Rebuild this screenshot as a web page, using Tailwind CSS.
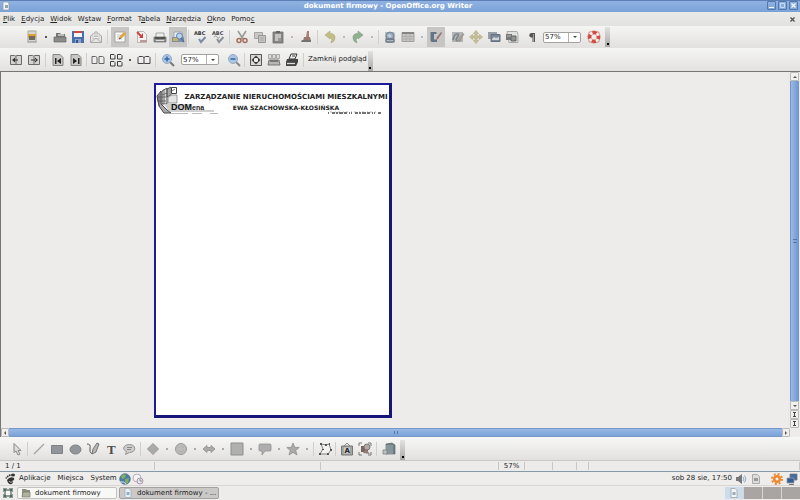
<!DOCTYPE html>
<html lang="pl">
<head>
<meta charset="utf-8">
<title>dokument firmowy - OpenOffice.org Writer</title>
<script src="https://cdn.jsdelivr.net/npm/@tailwindcss/browser@4"></script>
</head>
<body class="flex h-screen flex-col overflow-hidden bg-[#edeceb] font-['DejaVu_Sans',sans-serif] text-[7px] leading-none text-[#222]">

<header class="relative flex h-3 shrink-0 items-center justify-center border-t border-[#5c80b5] bg-linear-to-b from-[#8fb2e2] to-[#7ba2d8] text-white">
  <svg class="absolute left-0.5 top-0 h-2.5 w-2" viewBox="0 0 8 10"><path d="M1 1h5l1 2v6H1z" fill="#f1f4f4" stroke="#8b9ba8" stroke-width=".7"/><path d="M3 4h3v3H3z" fill="#91a4ad"/></svg>
  <h1 class="pr-6 text-[7px] font-bold">dokument firmowy - OpenOffice.org Writer</h1>
  <div class="absolute right-0.5 top-0 flex gap-[2px] [&>button]:grid [&>button]:size-[9px] [&>button]:place-items-center [&>button]:rounded-[1px] [&>button]:border [&>button]:border-[#5578aa]">
    <button aria-label="Minimalizuj"><svg class="size-[7px]" viewBox="0 0 7 7"><path d="M1 5.500h5" stroke="#fff"/></svg></button>
    <button aria-label="Maksymalizuj"><svg class="size-[7px]" viewBox="0 0 7 7"><path d="M1.500 1.500h4v4h-4z" fill="none" stroke="#c8daf2"/></svg></button>
    <button aria-label="Zamknij"><svg class="size-[7px]" viewBox="0 0 7 7"><path d="M1.500 1.500l4 4m0-4l-4 4" stroke="#fff" stroke-width="1.200"/></svg></button>
  </div>
</header>

<nav class="flex h-3.5 shrink-0 items-center gap-1.5 bg-linear-to-b from-[#eaeae9] to-[#e2e2e1] pl-[3px] pr-[5px]" aria-label="Menu">
  <button><u>P</u>lik</button><button><u>E</u>dycja</button><button><u>W</u>idok</button><button>W<u>s</u>taw</button><button><u>F</u>ormat</button><button>T<u>a</u>bela</button><button><u>N</u>arzędzia</button><button><u>O</u>kno</button><button>Pomo<u>c</u></button>
  <button class="ml-auto" aria-label="Zamknij dokument"><svg class="size-[5px]" viewBox="0 0 5 5"><path d="M.5.500l4 4m0-4l-4 4" stroke="#555" stroke-width="1.400"/></svg></button>
</nav>

<div role="toolbar" aria-label="Standardowy" class="flex h-[22px] shrink-0 items-center bg-linear-to-b from-[#f5f5f4] to-[#e1e0df] pl-[23px] [&>button]:grid [&>button]:h-5 [&>button]:w-[18px] [&>button]:place-items-center [&>i]:w-2.5 [&>i]:shrink-0 [&_svg]:size-3.5">
  <button aria-label="Nowy"><svg viewBox="0 0 14 14"><path d="M3 1h8v11H3z" fill="#d8d6cf" stroke="#aaa79b"/><path d="M3 4h8v4H3z" fill="#d9a43e"/><path d="M4 6h6v4H4z" fill="#70695e"/><path d="M2 12h10" stroke="#aaa"/></svg></button>
  <i class="grid place-items-center"><b class="size-[2px] bg-[#555]"></b></i>
  <button aria-label="Otwórz"><svg viewBox="0 0 14 14"><path d="M3 3h4l1 1h4v4H3z" fill="#777"/><path d="M5 4h6v2H5z" fill="#bbb"/><path d="M1 7h12v5H1z" fill="#8b8b8a" stroke="#666" stroke-width=".7"/></svg></button>
  <button aria-label="Zapisz"><svg viewBox="0 0 14 14"><path d="M1 1h12v12H1z" fill="#4a6fae"/><path d="M3 1h8v6H3z" fill="#f5f5f5"/><path d="M3 1h8v2H3z" fill="#cf4b41"/><path d="M4 9h6v4H4z" fill="#8da2c3"/><path d="M5 10h2v3H5z" fill="#345488"/></svg></button>
  <button aria-label="Wyślij"><svg viewBox="0 0 14 14"><path d="M1.500 6L7 1.500 12.500 6v6.500h-11z" fill="#e3e3e2" stroke="#aaa9a7"/><path d="M4 3.500h6v5H4z" fill="#f6f6f5" stroke="#bbb" stroke-width=".7"/><path d="M2 12l5-4 5 4M5 5h4M5 6.500h4" fill="none" stroke="#aaa" stroke-width=".8"/></svg></button>
  <span class="mx-[2px] h-3.5 w-[2px] border-l border-[#d0cfcd]"></span>
  <button aria-label="Edytuj plik" aria-pressed="true" class="bg-[#c7c6c4]"><svg viewBox="0 0 14 14"><path d="M2 2h10v10H2z" fill="#fafafa" stroke="#9a9a9a" stroke-width=".8"/><path d="M4 5h4M4 7h3M4 9h5" stroke="#bbb" stroke-width=".8"/><path d="M6 9l1-3 4-4 2 2-4 4z" fill="#e0a43b"/><path d="M6 9.500l.5-2 1.500 1z" fill="#444"/></svg></button>
  <span class="w-1"></span>
  <button aria-label="Eksportuj PDF"><svg viewBox="0 0 14 14"><path d="M2.500 1.500h6l3 3v8h-9z" fill="#f1f1f0" stroke="#aaa" stroke-width=".8"/><path d="M2 2l5 5" stroke="#c9443e" stroke-width="2"/><path d="M8 3v5H4z" fill="#c9443e"/><path d="M5 10h7v2H5z" fill="#b99"/></svg></button>
  <button aria-label="Drukuj"><svg viewBox="0 0 14 14"><path d="M3 3h8v5H3z" fill="#eee" stroke="#888" stroke-width=".7"/><path d="M1 7h12v5H1z" fill="#929291" stroke="#666" stroke-width=".7"/><path d="M2 8h10" stroke="#3f3f3f" stroke-width="1.500"/><path d="M3 10.500h8" stroke="#ddd"/></svg></button>
  <button aria-label="Podgląd strony" aria-pressed="true" class="bg-[#c7c6c4]"><svg viewBox="0 0 14 14"><path d="M3 2h8v7H3z" fill="#e9edf2" stroke="#8b98a6" stroke-width=".7"/><path d="M1 7h12v5H1z" fill="#7d8fa5"/><path d="M2 8h5v3H2z" fill="#c5b263"/><circle cx="8.500" cy="6" r="3" fill="#b9d3ee" stroke="#6183ad"/><path d="M10 8l3 4" stroke="#54739a" stroke-width="1.500"/></svg></button>
  <span class="mx-px h-3.5 w-[2px] border-l border-[#d0cfcd]"></span>
  <button aria-label="Pisownia"><svg viewBox="0 0 14 14"><text x="1" y="5" font-size="5" font-weight="bold" fill="#333">ABC</text><path d="M6 9l2 3 4.500-5" fill="none" stroke="#7b8da3" stroke-width="2"/></svg></button>
  <button aria-label="Autosprawdzanie"><svg viewBox="0 0 14 14"><text x="1" y="5" font-size="5" font-weight="bold" fill="#444">ABC</text><path d="M3 7q1.500-2 3 0t3 0" fill="none" stroke="#999"/><path d="M6 9l2 3 4.500-5" fill="none" stroke="#8b9398" stroke-width="2"/></svg></button>
  <span class="mx-[2px] h-3.5 w-[2px] border-l border-[#d0cfcd]"></span>
  <button aria-label="Wytnij"><svg viewBox="0 0 14 14"><path d="M3 1l5 8M11 1L6 9" stroke="#9b9a98" stroke-width="1.600"/><circle cx="4" cy="10.500" r="2" fill="none" stroke="#a56d5c" stroke-width="1.500"/><circle cx="10" cy="10.500" r="2" fill="none" stroke="#a56d5c" stroke-width="1.500"/></svg></button>
  <button aria-label="Kopiuj"><svg viewBox="0 0 14 14"><path d="M1.500 2.500h8v6h-8z" fill="#c9c8c6" stroke="#a5a4a2"/><path d="M5.500 5.500h7v7h-7z" fill="#c4c3c1" stroke="#999896"/><path d="M7 8h4M7 10h4" stroke="#aaa"/></svg></button>
  <button aria-label="Wklej"><svg viewBox="0 0 14 14"><path d="M2 2h10v11H2z" fill="#868583" stroke="#70706e" stroke-width=".8"/><path d="M4 4h6v7H4z" fill="#c4c3c1"/><path d="M5 1h4v2H5z" fill="#666"/><path d="M7 8h3v3H7z" fill="#999"/></svg></button>
  <i class="grid place-items-center"><b class="size-[2px] bg-[#bbb]"></b></i>
  <button aria-label="Pędzel formatów"><svg viewBox="0 0 14 14"><path d="M8 1h2v6H7z" fill="#ad8175"/><path d="M5 7h6l1 4H4z" fill="#98796f"/><path d="M3 10h9v2H2z" fill="#747271"/></svg></button>
  <span class="mx-[2px] h-3.5 w-[2px] border-l border-[#d0cfcd]"></span>
  <button aria-label="Cofnij"><svg viewBox="0 0 14 14"><path d="M2 5l5-4v2.500q5 0 5 4T8 13q2-5-1-5.500V9z" fill="#c3bd83" stroke="#aaa578" stroke-width=".6"/></svg></button>
  <i class="grid place-items-center"><b class="size-[2px] bg-[#bbb]"></b></i>
  <button aria-label="Ponów"><svg viewBox="0 0 14 14"><path d="M12 5L7 1v2.500q-5 0-5 4T6 13Q4 8 7 7.500V9z" fill="#90b18f" stroke="#799a79" stroke-width=".6"/></svg></button>
  <i class="grid place-items-center"><b class="size-[2px] bg-[#bbb]"></b></i>
  <span class="mx-px h-3.5 w-[2px] border-l border-[#d0cfcd]"></span>
  <button aria-label="Hiperłącze"><svg viewBox="0 0 14 14"><path d="M2 2h9l1 2v9H2z" fill="#b9bec3"/><circle cx="7" cy="6" r="4" fill="#94a9bb" stroke="#748797"/><path d="M4 5l3-1 2 2-2 2zM8 3l2 1" fill="#c7d0d5"/><rect x="3" y="9" width="8" height="3" rx="1.500" fill="none" stroke="#6f7881" stroke-width="1.300"/></svg></button>
  <button aria-label="Tabela"><svg viewBox="0 0 14 14"><path d="M1 2.500h12v9H1z" fill="#c6c5c3" stroke="#a09f9d"/><path d="M1 2h12v2H1z" fill="#858482"/><path d="M1 6.500h12M1 9h12M5 4v8M9 4v8" stroke="#aaa" stroke-width=".8"/></svg></button>
  <i class="grid place-items-center"><b class="size-[2px] bg-[#bbb]"></b></i>
  <button aria-label="Rysunek" aria-pressed="true" class="bg-[#c7c6c4]"><svg viewBox="0 0 14 14"><path d="M1.500 2h6v2.500H5v5h3V12H3q-1.500 0-1.500-2z" fill="#657585"/><path d="M5 4h5v5H5z" fill="#c1c8ce"/><path d="M7 10l1-3 4-5 1 1-4 6z" fill="#9a7469"/></svg></button>
  <span class="w-1"></span>
  <button aria-label="Znajdź"><svg viewBox="0 0 14 14"><path d="M1 2h11v10H1z" fill="#b1b5b8"/><path d="M2 10q1-6 4-6t0 4 4 2" fill="none" stroke="#7b838a" stroke-width="1.600"/><path d="M6 11l6-8 1.500 1-5 8z" fill="#a39b89"/></svg></button>
  <button aria-label="Nawigator"><svg viewBox="0 0 14 14"><path d="M7 .5l2.500 3H8v2.500h2.500V4.500l3 2.500-3 2.500V8H8v2.500h1.500L7 13.500l-2.500-3H6V8H3.500v1.500L.5 7l3-2.500V6H6V3.500H4.500z" fill="#c7c09a" stroke="#b5ae88" stroke-width=".8"/></svg></button>
  <button aria-label="Galeria"><svg viewBox="0 0 14 14"><path d="M1 2h9v7H1z" fill="#97a0a9"/><path d="M4 4.500h9v7H4z" fill="#7b8895" stroke="#66717d"/><path d="M5 9l2-2 2 1 3-1v3H5z" fill="#d0d5d9"/></svg></button>
  <button aria-label="Źródła danych"><svg viewBox="0 0 14 14"><path d="M2 1.500h10l1 3v8H4z" fill="#e2e2e0" stroke="#aaa"/><path d="M1 4h6v6H1z" fill="#767879"/><path d="M6 6h5v5H6z" fill="#909391" stroke="#646664"/><path d="M2 6h4" stroke="#bbb"/></svg></button>
  <span class="w-[2px]"></span>
  <button aria-label="Znaki niedrukowalne"><svg viewBox="0 0 14 14"><path d="M10 3H6.500a2 2 0 000 4.500H7.500V12H8.500V4H9v8h1z" fill="#555"/></svg></button>
  <span class="w-[2px]"></span>
  <div class="flex h-[11px] w-[38px] rounded-[2px] border border-[#a3a19e] bg-white">
    <input aria-label="Powiększenie" value="57%" class="w-[25px] min-w-0 pl-px text-[7px] outline-none"><button aria-label="Lista powiększeń" class="grid w-3 place-items-center border-l border-[#b4b2af]"><b class="border-x-2 border-t-2 border-x-transparent border-t-[#444]"></b></button>
  </div>
  <span class="w-1"></span>
  <button aria-label="Pomoc"><svg viewBox="0 0 14 14"><path d="M2 2h10v10H2z" fill="none" stroke="#d9867f" stroke-width=".8"/><circle cx="7" cy="7" r="4.500" fill="none" stroke="#d9776f" stroke-width="4"/><circle cx="7" cy="7" r="4.500" fill="none" stroke="#f6eeec" stroke-width="3"/><circle cx="7" cy="7" r="4.500" fill="none" stroke="#cf4a40" stroke-width="3.200" stroke-dasharray="4.270 2.800" stroke-dashoffset="2.130"/><circle cx="7" cy="7" r="2.200" fill="#eee"/></svg></button>
  <span class="ml-[2px] flex h-5 w-[5px] items-end justify-center bg-linear-to-b from-[#e2e2e0] to-[#aaa9a7] pb-[2px]"><b class="size-[2px] bg-black"></b></span>
</div>

<div role="toolbar" aria-label="Podgląd strony" class="flex h-[23px] shrink-0 items-center bg-linear-to-b from-[#f5f5f4] to-[#e3e2e1] pl-[7px] [&>button]:grid [&>button]:h-5 [&>button]:min-w-[18px] [&>button]:place-items-center [&>i]:w-2.5 [&>i]:shrink-0 [&_svg]:size-3.5">
  <button aria-label="Poprzednia strona"><svg viewBox="0 0 14 14"><path d="M1.500 2.500h4l1 .5 1-.5h5v9h-11z" fill="#d4d3d1" stroke="#6b6a68"/><path d="M7 3v8" stroke="#6b6a68"/><path d="M6 4.500v5L3 7zM5 6.500h4v1H5z" fill="#333"/></svg></button>
  <button aria-label="Następna strona"><svg viewBox="0 0 14 14"><path d="M1.500 2.500h4l1 .5 1-.5h5v9h-11z" fill="#d4d3d1" stroke="#6b6a68"/><path d="M7 3v8" stroke="#6b6a68"/><path d="M8 4.500v5L11 7zM4 6.500h5v1H4z" fill="#333"/></svg></button>
  <span class="mx-[2px] h-3.5 w-[2px] border-l border-[#d0cfcd]"></span>
  <button aria-label="Pierwsza strona"><svg viewBox="0 0 14 14"><path d="M2 1.500h7l3 3v8H2z" fill="#c9c8c6" stroke="#868583"/><path d="M4 5h1.500v6H4zM10 5v6L6 8z" fill="#222"/></svg></button>
  <button aria-label="Ostatnia strona"><svg viewBox="0 0 14 14"><path d="M2 1.500h7l3 3v8H2z" fill="#c9c8c6" stroke="#868583"/><path d="M9 5h1.500v6H9zM4 5v6l4-3z" fill="#222"/></svg></button>
  <span class="mx-px h-3.5 w-[2px] border-l border-[#d0cfcd]"></span>
  <button aria-label="Dwie strony"><svg viewBox="0 0 14 14"><path d="M1 3.500h3.500l1.500 1v6H1zM8 3.500h3.500l1.500 1v6H8z" fill="#eee" stroke="#666"/></svg></button>
  <button aria-label="Wiele stron"><svg viewBox="0 0 14 14"><path d="M1.500 1.500H5l1 1V6H1.500zM8.500 1.500H12l1 1V6H8.500zM1.500 8.500H5l1 1V13H1.500zM8.500 8.500H12l1 1V13H8.500z" fill="#eee" stroke="#3e3e3e"/></svg></button>
  <i class="grid place-items-center"><b class="size-[2px] bg-[#555]"></b></i>
  <button aria-label="Podgląd książki"><svg viewBox="0 0 14 14"><path d="M1 4.500l1-1h3.500l1.500 1 1.500-1H12l1 1v6H8L7 10l-1 .5H1zM7 4v6" fill="#eee" stroke="#444"/></svg></button>
  <span class="mx-[2px] h-3.5 w-[2px] border-l border-[#d0cfcd]"></span>
  <button aria-label="Powiększ"><svg viewBox="0 0 14 14"><path d="M8 8l5 5" stroke="#777" stroke-width="2"/><circle cx="6" cy="6" r="4.500" fill="#a9c5e5" stroke="#96a9bd"/><path d="M3.500 6h5M6 3.500v5" stroke="#3565a4" stroke-width="1.500"/></svg></button>
  <span class="w-1"></span>
  <div class="flex h-[11px] w-[38px] rounded-[2px] border border-[#a3a19e] bg-white">
    <input aria-label="Skala podglądu" value="57%" class="w-[25px] min-w-0 pl-px text-[7px] outline-none"><button aria-label="Lista skal" class="grid w-3 place-items-center border-l border-[#b4b2af]"><b class="border-x-2 border-t-2 border-x-transparent border-t-[#444]"></b></button>
  </div>
  <span class="w-1.5"></span>
  <button aria-label="Pomniejsz"><svg viewBox="0 0 14 14"><path d="M8 8l5 5" stroke="#888" stroke-width="2"/><circle cx="6" cy="6" r="4.500" fill="#a9c5e5" stroke="#96a9bd"/><path d="M3.500 6h5" stroke="#3565a4" stroke-width="1.500"/></svg></button>
  <span class="mx-px h-3.5 w-[2px] border-l border-[#d0cfcd]"></span>
  <button aria-label="Pełny ekran"><svg viewBox="0 0 14 14"><path d="M1.500 1.500h11v11h-11z" fill="#d9d8d6" stroke="#555"/><rect x="4.500" y="4.500" width="5" height="5" rx="1.500" fill="#eee" stroke="#333"/><path d="M7 2.500l1.500 1.500h-3zM7 11.500L8.500 10h-3zM2.500 7L4 5.500v3zM11.500 7L10 5.500v3z" fill="#444"/></svg></button>
  <button aria-label="Drukuj podgląd"><svg viewBox="0 0 14 14"><path d="M1.500 1.500h3v4h-3zM5.500 1.500h3v4h-3zM9.500 1.500h3v4h-3z" fill="#ddd" stroke="#999" stroke-width=".8"/><path d="M2 7h10l1 5H1z" fill="#b7b6b4" stroke="#777"/><path d="M3 7h8v2H3z" fill="#777"/></svg></button>
  <button aria-label="Opcje drukowania"><svg viewBox="0 0 14 14"><path d="M6 1h6l-2 5H4z" fill="#eee" stroke="#333"/><path d="M2 6h11v3l-2 4H1V9z" fill="#444"/><path d="M2 10.500h8" stroke="#ddd" stroke-width="1.300"/><path d="M7 3h3" stroke="#444"/></svg></button>
  <span class="mx-[2px] h-3.5 w-[2px] border-l border-[#d0cfcd]"></span>
  <button class="px-px">Zamknij podgląd</button>
  <span class="flex h-5 w-[5px] items-end justify-center self-end bg-linear-to-b from-[#e2e2e0] to-[#aaa9a7] pb-[2px]"><b class="size-[2px] bg-black"></b></span>
</div>

<main class="flex min-h-0 flex-1 border-l border-t border-[#777674]">
  <section class="flex min-w-0 flex-1 border-r border-[#f0e6e8] pb-2.5 pl-[153px] pt-[11px]" aria-label="Podgląd dokumentu">
    <article class="w-[238px] border-2 border-b-[3px] border-r-[3px] border-[#1b1b9c] border-b-[#15157a] border-r-[#15157a] bg-white font-bold text-[#222]">
      <div class="flex">
        <svg class="mt-px h-7 w-[27px] shrink-0 overflow-visible" viewBox="0 0 27 28"><path d="M1 10l4-5v13l6 6 4 3H8l-5-7z" fill="#aaa" stroke="#444"/><path d="M6 5l5-3v16H6zM11 3l4-2v8l-4 2z" fill="#ddd" stroke="#444" stroke-width=".9"/><path d="M15.500 1.500h5v6h-5z" fill="#fff" stroke="#444"/><path d="M1 11h9M1 15h9M3 8v12M8 3v15M13 2v8M16 5l3-2M6 9l5-2" stroke="#555" stroke-width=".8"/><path d="M16 9h5v8h-9v-6z" fill="#e4e4e4" stroke="#777" stroke-width=".7"/><path d="M8 18h27v6H12z" fill="#ccc"/><path d="M12 25h46" stroke="#888" stroke-width=".8"/><path d="M12 27.500h20M36 27.500h10M54 27.500h8" stroke="#aaa" stroke-width=".8"/><text x="15" y="24" font-size="9" font-family="Liberation Sans,sans-serif" fill="#111">DOM</text><text x="36" y="24" font-size="7" font-family="Liberation Sans,sans-serif" fill="#222">ena</text></svg>
        <div class="min-w-0 flex-1 pt-[9px] text-center">
          <p class="whitespace-nowrap text-[7px]">ZARZĄDZANIE NIERUCHOMOŚCIAMI MIESZKALNYMI</p>
          <p class="mt-1 whitespace-nowrap text-[6px]">EWA SZACHOWSKA-KŁOSIŃSKA</p>
          <svg class="ml-auto mr-2 h-1 w-[54px]" viewBox="0 0 54 4"><path d="M1 2h53" stroke="#444" stroke-width="1.500" stroke-dasharray="1 3 3 1 2 1 4 1 3 2 1 1"/><path d="M3 1h48" stroke="#777" stroke-width=".6" stroke-dasharray="2 3 1 2"/></svg>
        </div>
      </div>
    </article>
  </section>
  <div class="flex w-[11px] flex-col px-px [&>button]:grid [&>button]:h-[9px] [&>button]:place-items-center [&>button]:rounded-[1px] [&>button]:border [&>button]:border-[#bcbab8] [&>button]:bg-[#f1f0ef]">
    <button aria-label="W górę"><b class="border-x-2 border-b-2 border-x-transparent border-b-[#555]"></b></button>
    <div class="grid flex-1 place-items-center border-x border-[#7395c6] bg-linear-to-r from-[#9abae6] to-[#7499d0]"><span class="h-1 w-1 border-y border-[#5077b0]"></span></div>
    <button aria-label="W dół"><b class="border-x-2 border-t-2 border-x-transparent border-t-[#555]"></b></button>
    <button aria-label="Poprzednia"><svg class="size-[5px]" viewBox="0 0 5 5"><path d="M1 .5h3M1 4.500h3M2.500 0v5" stroke="#444"/></svg></button>
    <button aria-label="Następna"><svg class="size-[5px]" viewBox="0 0 5 5"><path d="M1 .5h3M1 4.500h3M2.500 0v5" stroke="#444"/></svg></button>
  </div>
</main>

<div class="flex h-[9px] shrink-0 border-l border-[#777674] pr-2.5 [&>button]:grid [&>button]:w-2 [&>button]:place-items-center [&>button]:rounded-[1px] [&>button]:border [&>button]:border-[#bcbab8] [&>button]:bg-[#f1f0ef]">
  <button aria-label="W lewo"><b class="border-y-2 border-r-2 border-y-transparent border-r-[#555]"></b></button>
  <div class="grid flex-1 place-items-center border-y border-[#7798c7] bg-linear-to-b from-[#98b9e6] to-[#7da2d8]"><span class="h-[3px] w-1 border-x border-[#5077b0]"></span></div>
  <button aria-label="W prawo"><b class="border-y-2 border-l-2 border-y-transparent border-l-[#555]"></b></button>
</div>

<div role="toolbar" aria-label="Rysunek" class="flex h-[23px] shrink-0 items-center bg-linear-to-b from-[#f7f7f6] to-[#e2e1e0] pl-2 [&>button]:grid [&>button]:h-5 [&>button]:w-[18px] [&>button]:place-items-center [&>i]:w-2.5 [&>i]:shrink-0 [&_svg]:size-3.5">
  <button aria-label="Zaznacz"><svg viewBox="0 0 14 14"><path d="M4 1.500v9l2-1.500 2 4 2-1-2-3.500h3z" fill="#ddd" stroke="#888"/></svg></button>
  <span class="mx-px h-3.5 w-[2px] border-l border-[#d0cfcd]"></span>
  <button aria-label="Linia"><svg viewBox="0 0 14 14"><path d="M2 12L12 2" stroke="#a3a3a2" stroke-width="1.200"/></svg></button>
  <button aria-label="Prostokąt"><svg viewBox="0 0 14 14"><path d="M1.500 3.500h11v8h-11z" fill="#929599" stroke="#7f8285"/></svg></button>
  <button aria-label="Elipsa"><svg viewBox="0 0 14 14"><ellipse cx="7.500" cy="7.500" rx="5.500" ry="4.500" fill="#929599" stroke="#7f8285"/></svg></button>
  <button aria-label="Linia odręczna"><svg viewBox="0 0 14 14"><path d="M1 2q4 0 3 4t2 6" fill="none" stroke="#555"/><path d="M6 12l1-5 4-6 2 1-3 8z" fill="#b7b6b4" stroke="#777"/></svg></button>
  <button aria-label="Tekst"><svg viewBox="0 0 14 14"><text x="3" y="12" font-size="13" font-weight="bold" font-family="Liberation Serif,serif" fill="#4d4d4d">T</text></svg></button>
  <button aria-label="Objaśnienie"><svg viewBox="0 0 14 14"><path d="M7.500 2.500c7 0 7 8 0 8l-4 2 1-3c-5-2-3-7 3-7z" fill="#ccc" stroke="#969695"/><path d="M5 5.500h5M5 7.500h4" stroke="#888"/></svg></button>
  <span class="mx-[2px] h-3.5 w-[2px] border-l border-[#d0cfcd]"></span>
  <button aria-label="Kształty podstawowe"><svg viewBox="0 0 14 14"><path d="M7 1.500L12.500 7 7 12.500 1.500 7z" fill="#aaa" stroke="#999"/></svg></button>
  <i class="grid place-items-center"><b class="size-[2px] bg-[#aaa]"></b></i>
  <button aria-label="Symbole"><svg viewBox="0 0 14 14"><circle cx="7" cy="7" r="5.500" fill="#bbb" stroke="#999"/><path d="M4 8q3 4 6 0M5 5v1m4-1v1" fill="none" stroke="#aaa"/></svg></button>
  <i class="grid place-items-center"><b class="size-[2px] bg-[#aaa]"></b></i>
  <button aria-label="Strzałki blokowe"><svg viewBox="0 0 14 14"><path d="M1 7l4-3.500v2h4v-2L13 7l-4 3.500v-2H5v2z" fill="#aaa" stroke="#999"/></svg></button>
  <i class="grid place-items-center"><b class="size-[2px] bg-[#aaa]"></b></i>
  <button aria-label="Schematy blokowe"><svg viewBox="0 0 14 14"><path d="M1 1h12v12H1z" fill="#b0b0af" stroke="#8e8e8d"/></svg></button>
  <i class="grid place-items-center"><b class="size-[2px] bg-[#aaa]"></b></i>
  <button aria-label="Objaśnienia"><svg viewBox="0 0 14 14"><path d="M2 2h10q1 0 1 1v5q0 1-1 1H7l-3 4V9H2Q1 9 1 8V3q0-1 1-1z" fill="#aeaeae" stroke="#939392" stroke-width=".8"/></svg></button>
  <i class="grid place-items-center"><b class="size-[2px] bg-[#aaa]"></b></i>
  <button aria-label="Gwiazdy"><svg viewBox="0 0 14 14"><path d="M7 1l1.700 4.300 4.500.2-3.500 2.900L11 13 7 10.400 3 13l1.300-4.600L.8 5.500l4.500-.2z" fill="#aaa" stroke="#888" stroke-width=".7"/></svg></button>
  <i class="grid place-items-center"><b class="size-[2px] bg-[#aaa]"></b></i>
  <span class="mx-px h-3.5 w-[2px] border-l border-[#d0cfcd]"></span>
  <button aria-label="Punkty"><svg viewBox="0 0 14 14"><path d="M3 2l5 1 3-1 2 6-3 4H2l3-5z" fill="#f2f2f1" stroke="#777" stroke-width=".9"/><path d="M2 1h2v2H2zM7 2h2v2H7zM11 1h1v2h-1zM12 7h2v2h-2zM9 11h2v2H9zM1 11h2v2H1zM4 7h2v1H4z" fill="#555"/></svg></button>
  <span class="mx-px h-3.5 w-[2px] border-l border-[#d0cfcd]"></span>
  <button aria-label="Galeria czcionek"><svg viewBox="0 0 14 14"><path d="M4 4l3-3 3 3" fill="none" stroke="#888"/><path d="M1.500 4h11v9h-11z" fill="#a4a5a5" stroke="#777"/><path d="M4 5.500h6v6H4z" fill="#ccc"/><text x="4.500" y="11" font-size="7" font-weight="bold" fill="#222">A</text></svg></button>
  <button aria-label="Z pliku"><svg viewBox="0 0 14 14"><path d="M3 4h7v6H3z" fill="#7c6460"/><circle cx="9" cy="5" r="3" fill="#b5aaa6" stroke="#777"/><path d="M5 11l3-4 4 5z" fill="#947c76"/><path d="M1 4V1h3M10 1h3v3M13 10v3h-3M4 13H1v-3" fill="none" stroke="#777"/></svg></button>
  <span class="mx-[2px] h-3.5 w-[2px] border-l border-[#d0cfcd]"></span>
  <button aria-label="Efekty 3D"><svg viewBox="0 0 14 14"><path d="M4 2l6-1 3 2v9H4z" fill="#727d80" stroke="#5e676a" stroke-width=".7"/><path d="M4 3h7v9H4z" fill="#87969b"/><path d="M1 8h4v4H1z" fill="#bbc3c4" stroke="#777" stroke-width=".7"/></svg></button>
  <span class="ml-[2px] flex h-5 w-[5px] items-end justify-center self-end bg-linear-to-b from-[#e2e2e0] to-[#aaa9a7] pb-[2px]"><b class="size-[2px] bg-black"></b></span>
</div>

<footer class="flex h-[11px] shrink-0 items-center border-t border-[#c9c8c6] text-[7px] [&>span]:flex [&>span]:h-2 [&>span]:items-center [&>span]:border-r [&>span]:border-[#c7c6c4]">
  <span class="w-[155px] pl-[5px]">1 / 1</span><span class="w-[166px]"></span><span class="w-[178px]"></span><span class="w-[26px] justify-center">57%</span><span class="w-7"></span><span class="w-6"></span><span class="w-3"></span><span class="flex-1"></span>
</footer>

<nav class="flex h-[15px] shrink-0 items-center border-b border-t border-b-[#d8d7d5] border-t-[#8799a6] bg-[#eeedec] pl-1 pr-[2px]" aria-label="Panel">
  <svg class="mr-px h-3 w-[14px]" viewBox="0 0 14 12"><ellipse cx="9" cy="2" rx="2" ry="1.500" fill="#333"/><circle cx="5.700" cy="2.300" r="1" fill="#333"/><circle cx="3.700" cy="3.500" r=".9" fill="#333"/><circle cx="2.200" cy="5" r=".8" fill="#333"/><path d="M3 7q3-4 7-2 1 2-2 3l1 1-1 2q-4 1-5-4z" fill="#333"/><path d="M5 8q1 2 3 1" fill="none" stroke="#eee" stroke-width=".7"/></svg>
  <div class="flex gap-[7px]"><button>Aplikacje</button><button>Miejsca</button><button>System</button></div>
  <a href="#www" aria-label="Przeglądarka" class="ml-[2px]"><svg class="size-3" viewBox="0 0 12 12"><circle cx="6" cy="6" r="5.300" fill="#487bac" stroke="#547083" stroke-width=".8"/><path d="M2 3q3-3 5-1L6 5 3 6zM6 6l4-1-1 5-3 1z" fill="#81ad5c"/><path d="M1 9q4-1 6 2" fill="none" stroke="#dce8ef"/></svg></a>
  <a href="#poczta" aria-label="Poczta" class="ml-px"><svg class="size-3" viewBox="0 0 12 12"><circle cx="5" cy="5" r="4" fill="#f3f3f2" stroke="#b9aebb"/><circle cx="8" cy="8" r="3" fill="#e8e3ec" stroke="#af91b4"/><path d="M8 6v2h2" fill="none" stroke="#897"/></svg></a>
  <time class="ml-auto" datetime="17:50">sob 28 sie, 17:50</time>
  <svg class="ml-[3px] h-3 w-3" viewBox="0 0 12 12"><path d="M1 4h2l4-3v10L3 8H1z" fill="#777"/><path d="M8 4q2 2 0 4M9.500 2.500q3 3 0 7" fill="none" stroke="#86aacb"/></svg>
  <svg class="ml-1 h-3 w-2.5" viewBox="0 0 10 12"><path d="M1.500 1.500h5l2 2v7h-7z" fill="#ddd" stroke="#aaa"/><path d="M3 5h4v3H3z" fill="#999"/></svg>
  <svg class="ml-2.5 size-3" viewBox="0 0 12 12"><circle cx="6" cy="6" r="4" fill="#ec8936"/><circle cx="6" cy="6" r="5" fill="none" stroke="#ec8936" stroke-width="2" stroke-dasharray="2 1.930"/><circle cx="6" cy="6" r="1.500" fill="#fff0dc"/></svg>
  <svg class="ml-[3px] size-3" viewBox="0 0 12 12"><path d="M4 1h7v6H4z" fill="#426aa1" stroke="#777" stroke-width=".8"/><path d="M1 5h7v5H1z" fill="#315d9a" stroke="#999" stroke-width=".8"/><path d="M3 11.500h5" stroke="#777"/></svg>
</nav>

<div class="flex h-3.5 shrink-0 items-stretch gap-[2px] bg-[#edeceb] pb-px pl-[2px] pt-px">
  <button aria-label="Pokaż pulpit" class="mr-px grid w-3 place-items-center"><svg class="size-2.5" viewBox="0 0 10 10"><path d="M0 0h10v10H0z" fill="#8a9c91"/><path d="M3 3h4v4H3z" fill="#f5f5f5"/><path d="M0 4h1v2H0zM9 4h1v2H9zM4 0h2v1H4zM4 9h2v1H4z" fill="#eee"/><path d="M1 1h2v2H1zM7 1h2v2H7zM1 7h2v2H1zM7 7h2v2H7z" fill="#52675a"/></svg></button>
  <button class="flex w-[100px] items-center gap-1 whitespace-nowrap rounded-[2px] border border-[#c4c2bf] bg-[#f8f8f7] pl-[3px]"><svg class="size-2.5 shrink-0" viewBox="0 0 10 10"><path d="M1 1h4l1 1h3v7H1z" fill="#8c907c"/><path d="M2 4h7v5H1z" fill="#b1b39e" stroke="#777b68" stroke-width=".7"/></svg>dokument firmowy</button>
  <button aria-pressed="true" class="flex w-[100px] items-center gap-1 whitespace-nowrap rounded-[2px] border border-[#a3a19e] bg-[#cac9c7] pl-[3px]"><svg class="size-2.5 shrink-0" viewBox="0 0 10 10"><path d="M2 .5h4l2 2v7H2z" fill="#e8eef2" stroke="#9aabb7" stroke-width=".7"/><path d="M3.500 4h3v3h-3z" fill="#8fb0ca"/></svg>dokument firmowy - ...</button>
  <div class="ml-auto flex gap-px bg-[#d7d6d4] [&>button]:w-[18px] [&>button]:bg-[#a8a5a2]" aria-label="Obszary robocze">
    <button aria-label="Obszar 1" class="grid place-items-center bg-[#cbdcec]!"><svg class="h-2.5 w-2" viewBox="0 0 8 10"><path d="M1 .5h4l2 2v7H1z" fill="#f4f4f4" stroke="#999" stroke-width=".7"/><path d="M2.500 4h3v3h-3z" fill="#9ab"/></svg></button><button aria-label="Obszar 2"></button><button aria-label="Obszar 3"></button><button aria-label="Obszar 4"></button>
  </div>
</div>
</body>
</html>
